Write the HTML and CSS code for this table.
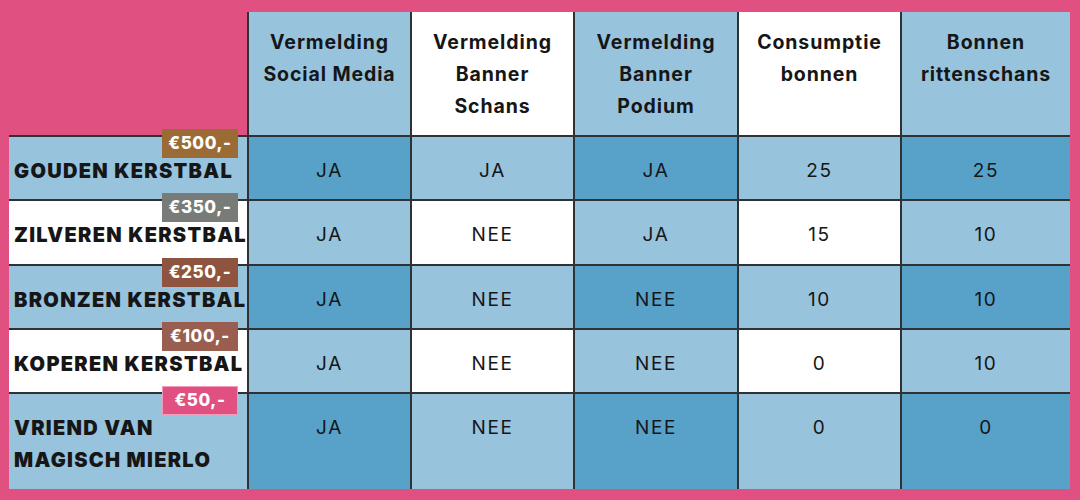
FILE: index.html
```html
<!DOCTYPE html>
<html lang="nl">
<head>
<meta charset="utf-8">
<title>Sponsorpakketten</title>
<link rel="stylesheet" href="styles.css">
</head>
<body>
<div class="page">
  <table class="pkg">
    <colgroup>
      <col class="c-label">
      <col class="c-a">
      <col class="c-b">
      <col class="c-c">
      <col class="c-d">
      <col class="c-e">
    </colgroup>
    <thead>
      <tr class="r-head">
        <th class="corner"></th>
        <th class="lt">Vermelding<br>Social Media</th>
        <th class="wh">Vermelding<br>Banner<br>Schans</th>
        <th class="lt">Vermelding<br>Banner<br>Podium</th>
        <th class="wh">Consumptie<br>bonnen</th>
        <th class="lt last">Bonnen<br>rittenschans</th>
      </tr>
    </thead>
    <tbody>
      <tr class="r1 odd">
        <th class="label"><span class="badge b-gold">€500,-</span>GOUDEN KERSTBAL</th>
        <td>JA</td><td>JA</td><td>JA</td><td>25</td><td class="last">25</td>
      </tr>
      <tr class="r2 even">
        <th class="label"><span class="badge b-silver">€350,-</span>ZILVEREN KERSTBAL</th>
        <td>JA</td><td>NEE</td><td>JA</td><td>15</td><td class="last">10</td>
      </tr>
      <tr class="r3 odd">
        <th class="label"><span class="badge b-bronze">€250,-</span>BRONZEN KERSTBAL</th>
        <td>JA</td><td>NEE</td><td>NEE</td><td>10</td><td class="last">10</td>
      </tr>
      <tr class="r4 even">
        <th class="label"><span class="badge b-copper">€100,-</span>KOPEREN KERSTBAL</th>
        <td>JA</td><td>NEE</td><td>NEE</td><td>0</td><td class="last">10</td>
      </tr>
      <tr class="r5 odd">
        <th class="label"><span class="badge b-pink">€50,-</span>VRIEND VAN<br>MAGISCH MIERLO</th>
        <td>JA</td><td>NEE</td><td>NEE</td><td>0</td><td class="last">0</td>
      </tr>
    </tbody>
  </table>
</div>
</body>
</html>
```

FILE: styles.css
```css
html, body {
  margin: 0;
  padding: 0;
  background: #e05080;
}

body {
  width: 1080px;
  height: 500px;
  overflow: hidden;
  font-family: Inter, "Noto Sans", "Liberation Sans", sans-serif;
  color: #161616;
}

.page {
  padding: 12px 0 0 9px;
}

.pkg {
  border-collapse: collapse;
  table-layout: fixed;
  width: 1061px;
}

.c-label { width: 239px; }
.c-a { width: 163px; }
.c-b { width: 163px; }
.c-c { width: 164px; }
.c-d { width: 163px; }
.c-e { width: 169px; }

.pkg th,
.pkg td {
  padding: 0;
  vertical-align: top;
  text-align: center;
  border-left: 2px solid #2e3235;
  border-top: 2px solid #2e3235;
}

.r-head { height: 124px; }
.r1 { height: 64px; }
.r2 { height: 65px; }
.r3 { height: 64px; }
.r4 { height: 64px; }
.r5 { height: 96px; }

/* header */
.r-head th {
  border-top: none;
  font-size: 19.5px;
  font-weight: 700;
  line-height: 32px;
  padding-top: 14px;
  letter-spacing: 0.9px;
}

.r-head .corner {
  background: transparent;
  border-left: none;
}

.lt { background: #97c3dd; }
.wh { background: #ffffff; }

/* body rows */
.pkg td {
  font-size: 19px;
  font-weight: 400;
  line-height: 32px;
  padding-top: 18px;
  letter-spacing: 1.6px;
}

.pkg .label {
  position: relative;
  text-align: left;
  border-left: none;
  padding: 18px 0 0 5px;
  font-size: 20px;
  font-weight: 900;
  line-height: 32px;
  letter-spacing: 1.3px;
  white-space: nowrap;
}

.odd .label { background: #97c3dd; }
.even .label { background: #ffffff; }

.odd td:nth-child(odd) { background: #97c3dd; }
.odd td:nth-child(even) { background: #58a2ca; }
.even td:nth-child(odd) { background: #ffffff; }
.even td:nth-child(even) { background: #97c3dd; }

.badge {
  position: absolute;
  top: -8px;
  right: 9px;
  width: 76px;
  height: 29px;
  box-sizing: border-box;
  color: #ffffff;
  font-size: 17px;
  font-weight: 800;
  line-height: 29px;
  text-align: center;
  letter-spacing: 0.6px;
  z-index: 2;
}

.b-gold { background: #9b6b35; }
.b-silver { background: #787c79; }
.b-bronze { background: #8e5440; }
.b-copper { background: #995e4f; }
.b-pink {
  background: #e05080;
  border: 1px solid #f29ab8;
  line-height: 27px;
}
```
